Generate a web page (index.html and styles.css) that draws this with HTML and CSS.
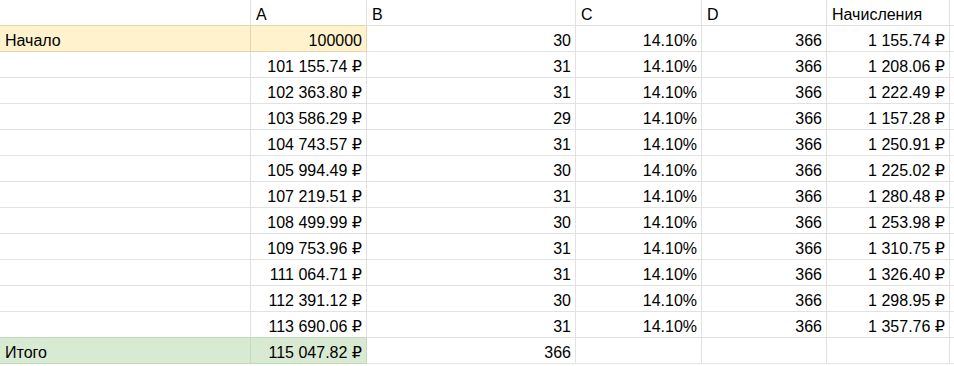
FILE: index.html
```html
<!DOCTYPE html>
<html lang="ru">
<head>
<meta charset="utf-8">
<title>Sheet</title>
<link rel="stylesheet" href="styles.css">
</head>
<body>
<div class="sheet">
  <div class="c bt-y"></div><div class="c bt-y">A</div><div class="c">B</div><div class="c">C</div><div class="c">D</div><div class="c">Начисления</div><div class="c"></div>

  <div class="c yel">Начало</div><div class="c yel r">100000</div><div class="c r">30</div><div class="c r">14.10%</div><div class="c r">366</div><div class="c r">1&nbsp;155.74&nbsp;₽</div><div class="c"></div>

  <div class="c"></div><div class="c r">101&nbsp;155.74&nbsp;₽</div><div class="c r">31</div><div class="c r">14.10%</div><div class="c r">366</div><div class="c r">1&nbsp;208.06&nbsp;₽</div><div class="c"></div>

  <div class="c"></div><div class="c r">102&nbsp;363.80&nbsp;₽</div><div class="c r">31</div><div class="c r">14.10%</div><div class="c r">366</div><div class="c r">1&nbsp;222.49&nbsp;₽</div><div class="c"></div>

  <div class="c"></div><div class="c r">103&nbsp;586.29&nbsp;₽</div><div class="c r">29</div><div class="c r">14.10%</div><div class="c r">366</div><div class="c r">1&nbsp;157.28&nbsp;₽</div><div class="c"></div>

  <div class="c"></div><div class="c r">104&nbsp;743.57&nbsp;₽</div><div class="c r">31</div><div class="c r">14.10%</div><div class="c r">366</div><div class="c r">1&nbsp;250.91&nbsp;₽</div><div class="c"></div>

  <div class="c"></div><div class="c r">105&nbsp;994.49&nbsp;₽</div><div class="c r">30</div><div class="c r">14.10%</div><div class="c r">366</div><div class="c r">1&nbsp;225.02&nbsp;₽</div><div class="c"></div>

  <div class="c"></div><div class="c r">107&nbsp;219.51&nbsp;₽</div><div class="c r">31</div><div class="c r">14.10%</div><div class="c r">366</div><div class="c r">1&nbsp;280.48&nbsp;₽</div><div class="c"></div>

  <div class="c"></div><div class="c r">108&nbsp;499.99&nbsp;₽</div><div class="c r">30</div><div class="c r">14.10%</div><div class="c r">366</div><div class="c r">1&nbsp;253.98&nbsp;₽</div><div class="c"></div>

  <div class="c"></div><div class="c r">109&nbsp;753.96&nbsp;₽</div><div class="c r">31</div><div class="c r">14.10%</div><div class="c r">366</div><div class="c r">1&nbsp;310.75&nbsp;₽</div><div class="c"></div>

  <div class="c"></div><div class="c r">111&nbsp;064.71&nbsp;₽</div><div class="c r">31</div><div class="c r">14.10%</div><div class="c r">366</div><div class="c r">1&nbsp;326.40&nbsp;₽</div><div class="c"></div>

  <div class="c"></div><div class="c r">112&nbsp;391.12&nbsp;₽</div><div class="c r">30</div><div class="c r">14.10%</div><div class="c r">366</div><div class="c r">1&nbsp;298.95&nbsp;₽</div><div class="c"></div>

  <div class="c bt-g"></div><div class="c r bt-g">113&nbsp;690.06&nbsp;₽</div><div class="c r">31</div><div class="c r">14.10%</div><div class="c r">366</div><div class="c r">1&nbsp;357.76&nbsp;₽</div><div class="c"></div>

  <div class="c grn">Итого</div><div class="c grn r">115&nbsp;047.82&nbsp;₽</div><div class="c r">366</div><div class="c"></div><div class="c"></div><div class="c"></div><div class="c"></div>
</div>
</body>
</html>
```
FILE: styles.css
```css
html, body {
  margin: 0;
  padding: 0;
  background: #ffffff;
}

.sheet {
  display: grid;
  grid-template-columns: 251px 116px 209px 126px 125px 123px 1fr;
  grid-auto-rows: 26px;
  font-family: "Liberation Sans", Arial, "DejaVu Sans", sans-serif;
  font-size: 16px;
  color: #000000;
}

.c {
  box-sizing: border-box;
  height: 26px;
  padding: 4px 4px 0 5px;
  line-height: 21px;
  white-space: nowrap;
  overflow: hidden;
  border-right: 1px solid #e2e2e2;
  border-bottom: 1px solid #e2e2e2;
}

.r {
  text-align: right;
}

.yel {
  background: #fff2cc;
  border-right-color: #e3d6ad;
  border-bottom-color: #e3d6ad;
}

.grn {
  background: #d9ead3;
  border-right-color: #c4d8bd;
  border-bottom-color: #c4d8bd;
}

.bt-y {
  border-bottom-color: #e3d6ad;
}

.bt-g {
  border-bottom-color: #c4d8bd;
}
```
